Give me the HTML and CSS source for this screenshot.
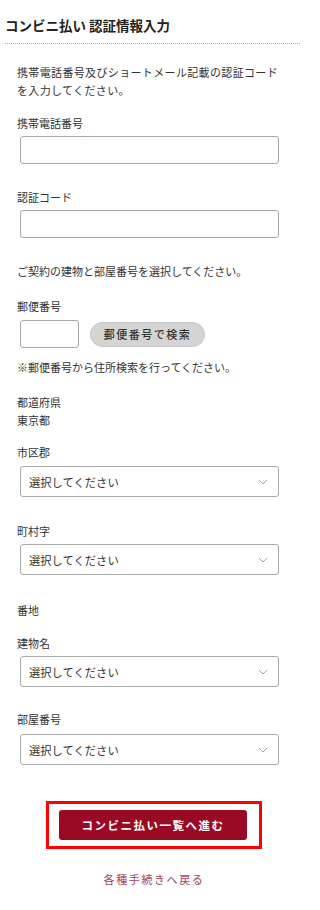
FILE: index.html
```html
<!DOCTYPE html>
<html lang="ja">
<head>
<meta charset="utf-8">
<title>コンビニ払い 認証情報入力</title>
<link rel="stylesheet" href="styles.css">
</head>
<body>
<div class="page">
  <header class="head">
    <h1 class="title">コンビニ払い 認証情報入力</h1>
  </header>
  <main class="main">
    <p class="lead">携帯電話番号及びショートメール記載の認証コードを入力してください。</p>

    <div class="label gap-15">携帯電話番号</div>
    <div class="field"></div>

    <div class="label gap-24">認証コード</div>
    <div class="field"></div>

    <p class="label gap-24">ご契約の建物と部屋番号を選択してください。</p>

    <div class="label gap-17">郵便番号</div>
    <div class="zip-row">
      <div class="field zip"></div>
      <div class="zip-btn">郵便番号で検索</div>
    </div>
    <p class="label note">※郵便番号から住所検索を行ってください。</p>

    <div class="label gap-17">都道府県</div>
    <div class="label">東京都</div>

    <div class="label gap-14">市区郡</div>
    <div class="select s1"><span>選択してください</span><svg class="chev" viewBox="0 0 10 6" width="10" height="6"><path d="M1 1 L5 5 L9 1" fill="none" stroke="#999" stroke-width="0.9"/></svg></div>

    <div class="label gap-25">町村字</div>
    <div class="select"><span>選択してください</span><svg class="chev" viewBox="0 0 10 6" width="10" height="6"><path d="M1 1 L5 5 L9 1" fill="none" stroke="#999" stroke-width="0.9"/></svg></div>

    <div class="label gap-26">番地</div>

    <div class="label gap-15">建物名</div>
    <div class="select"><span>選択してください</span><svg class="chev" viewBox="0 0 10 6" width="10" height="6"><path d="M1 1 L5 5 L9 1" fill="none" stroke="#999" stroke-width="0.9"/></svg></div>

    <div class="label gap-23">部屋番号</div>
    <div class="select s4"><span>選択してください</span><svg class="chev" viewBox="0 0 10 6" width="10" height="6"><path d="M1 1 L5 5 L9 1" fill="none" stroke="#999" stroke-width="0.9"/></svg></div>

    <div class="highlight">
      <div class="submit">コンビニ払い一覧へ進む</div>
    </div>

    <div class="back">各種手続きへ戻る</div>
  </main>
</div>
</body>
</html>
```

FILE: styles.css
```css
* { box-sizing: border-box; }
html, body { margin: 0; padding: 0; background: #fff; }
body {
  font-family: "Noto Sans CJK JP", "Noto Sans", sans-serif;
  color: #333;
  font-size: 11px;
}
.page { width: 300px; }
.head {
  margin-left: 5px;
  padding: 15px 0 8px;
  border-bottom: 1px dotted #a8a8a8;
}
.title {
  margin: 0;
  font-size: 13.5px;
  line-height: 20px;
  font-weight: bold;
  color: #222;
}
.main { padding: 0 21px 0 17px; }
.lead {
  margin: 19px 0 0;
  line-height: 18px;
  letter-spacing: 0.35px;
}
.label {
  margin: 0;
  line-height: 18px;
}
.gap-14 { margin-top: 14px; }
.gap-15 { margin-top: 15px; }
.gap-17 { margin-top: 17px; }
.gap-23 { margin-top: 23px; }
.gap-24 { margin-top: 24px; }
.gap-25 { margin-top: 25px; }
.gap-26 { margin-top: 26px; }
.note { margin-top: 10px; }
.field {
  margin: 4px 0 0 3px;
  width: 259px;
  height: 28px;
  border: 1px solid #a9a9a9;
  border-radius: 3px;
  background: #fff;
}
.zip-row {
  display: flex;
  align-items: center;
  gap: 11px;
  margin-top: 5px;
}
.field.zip { width: 59px; margin-top: 0; }
.zip-btn {
  width: 115px;
  height: 25px;
  border-radius: 13px;
  background: #d4d4d4;
  border: 1px solid #c6c6c6;
  display: flex;
  align-items: center;
  justify-content: center;
  font-weight: 500;
  letter-spacing: 1.5px;
  color: #333;
}
.select {
  margin: 4px 0 0 3px;
  width: 259px;
  height: 31px;
  border: 1px solid #aaa;
  border-radius: 3px;
  display: flex;
  align-items: center;
  justify-content: space-between;
  padding: 0 10px 0 8px;
  font-size: 11.3px;
  color: #333;
}
.select.s1 { margin-top: 5px; }
.select.s4 { margin-top: 6px; }
.chev { display: block; }
.highlight {
  margin: 36px 0 0 29px;
  width: 216px;
  border: 3px solid #ff0000;
  padding: 6px 12px 6px 10px;
}
.submit {
  height: 30px;
  border-radius: 3px;
  background: #9b0a24;
  color: #fff;
  font-weight: bold;
  font-size: 11.5px;
  letter-spacing: 1.5px;
  display: flex;
  align-items: center;
  justify-content: center;
}
.back {
  margin: 21px 0 0;
  padding-left: 12px;
  line-height: 18px;
  text-align: center;
  color: #a5405e;
  letter-spacing: 1.6px;
}
```
